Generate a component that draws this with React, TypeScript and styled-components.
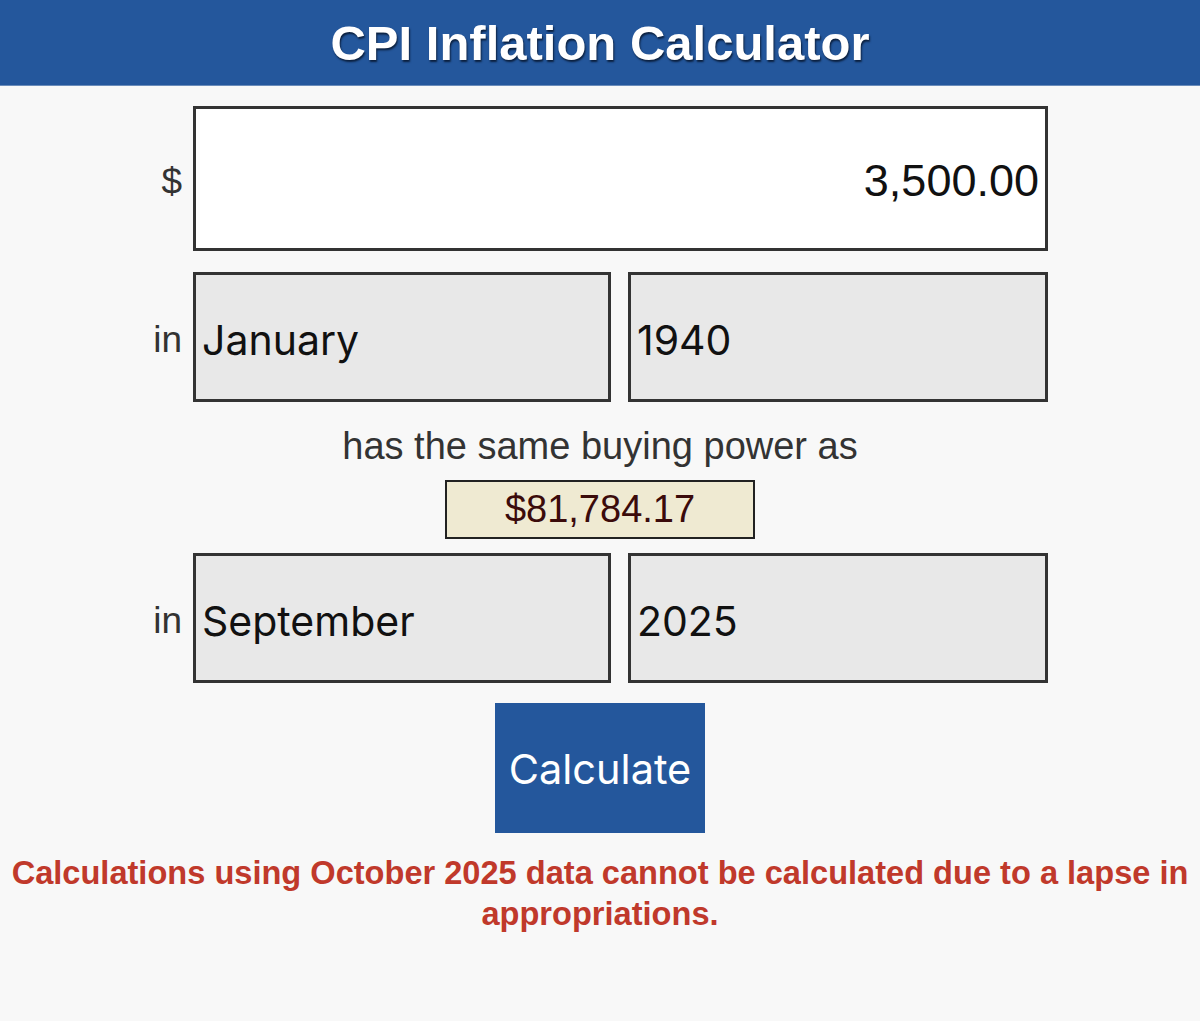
import React from 'react';
import styled, { createGlobalStyle } from 'styled-components';

const GlobalStyle = createGlobalStyle`
  html, body {
    margin: 0;
    padding: 0;
    background: #f8f8f8;
  }
  body {
    font-family: "Liberation Sans", Arial, sans-serif;
  }
`;

//#region Styled
const Page = styled.div`
  width: 1200px;
  min-height: 1021px;
  background: #f8f8f8;
  display: flex;
  flex-direction: column;
`;

const Header = styled.header`
  height: 85px;
  background: #24579c;
  border-bottom: 1px solid #6a8cba;
  display: flex;
  align-items: center;
  justify-content: center;
`;

const Title = styled.h1`
  margin: 0;
  color: #ffffff;
  font-family: "Liberation Sans", Arial, sans-serif;
  font-weight: bold;
  font-size: 49px;
  text-shadow: 1px 2px 2px #0b1f3d;
`;

const Form = styled.div`
  display: flex;
  flex-direction: column;
  align-items: stretch;
`;

const Row = styled.div<{ $top: number }>`
  display: flex;
  align-items: center;
  margin-top: ${(p) => p.$top}px;
`;

const Label = styled.div`
  width: 182px;
  margin-right: 11px;
  padding-top: 6px;
  text-align: right;
  color: #333333;
  font-family: "Liberation Sans", Arial, sans-serif;
  font-size: 37px;
`;

const Fields = styled.div`
  width: 855px;
  display: flex;
  gap: 17px;
`;

const AmountBox = styled.div`
  flex: 1;
  height: 145px;
  box-sizing: border-box;
  border: 3px solid #333333;
  background: #ffffff;
  display: flex;
  align-items: center;
  justify-content: flex-end;
  padding: 4px 6px 0 0;
  font-family: "Liberation Sans", Arial, sans-serif;
  font-size: 45px;
  color: #111111;
`;

const SelectBox = styled.div<{ $width: number }>`
  width: ${(p) => p.$width}px;
  height: 130px;
  box-sizing: border-box;
  border: 3px solid #333333;
  background: #e8e8e8;
  display: flex;
  align-items: center;
  padding: 5px 0 0 6px;
  font-family: Inter, "Liberation Sans", sans-serif;
  font-size: 41px;
  color: #111111;
`;

const Middle = styled.div`
  margin-top: 24px;
  text-align: center;
  color: #333333;
  font-family: "Liberation Sans", Arial, sans-serif;
  font-size: 38px;
  line-height: 40px;
`;

const ResultWrap = styled.div`
  display: flex;
  justify-content: center;
  margin-top: 14px;
`;

const Result = styled.div`
  width: 310px;
  height: 59px;
  box-sizing: border-box;
  border: 2px solid #222222;
  background: #efead2;
  color: #3b0b0b;
  display: flex;
  align-items: center;
  justify-content: center;
  font-family: "Liberation Sans", Arial, sans-serif;
  font-size: 38px;
`;

const ButtonWrap = styled.div`
  display: flex;
  justify-content: center;
  margin-top: 20px;
`;

const Button = styled.button`
  width: 210px;
  height: 130px;
  border: none;
  background: #24579c;
  color: #ffffff;
  font-family: Inter, "Liberation Sans", sans-serif;
  font-size: 41.5px;
  padding: 2px 0 0;
  cursor: pointer;
`;

const Notice = styled.p`
  margin: 19px 0 0;
  padding: 0 2px;
  text-align: center;
  color: #c0392b;
  font-family: "Liberation Sans", Arial, sans-serif;
  font-weight: bold;
  font-size: 32.6px;
  line-height: 41px;
`;
//#endregion

export default function App() {
  return (
    <>
      <GlobalStyle />
      <Page>
        <Header>
          <Title>CPI Inflation Calculator</Title>
        </Header>
        <Form>
          <Row $top={20}>
            <Label>$</Label>
            <Fields>
              <AmountBox>3,500.00</AmountBox>
            </Fields>
          </Row>
          <Row $top={21}>
            <Label>in</Label>
            <Fields>
              <SelectBox $width={418}>January</SelectBox>
              <SelectBox $width={420}>1940</SelectBox>
            </Fields>
          </Row>
          <Middle>has the same buying power as</Middle>
          <ResultWrap>
            <Result>$81,784.17</Result>
          </ResultWrap>
          <Row $top={14}>
            <Label>in</Label>
            <Fields>
              <SelectBox $width={418}>September</SelectBox>
              <SelectBox $width={420}>2025</SelectBox>
            </Fields>
          </Row>
          <ButtonWrap>
            <Button>Calculate</Button>
          </ButtonWrap>
          <Notice>
            Calculations using October 2025 data cannot be calculated due to a
            lapse in appropriations.
          </Notice>
        </Form>
      </Page>
    </>
  );
}
